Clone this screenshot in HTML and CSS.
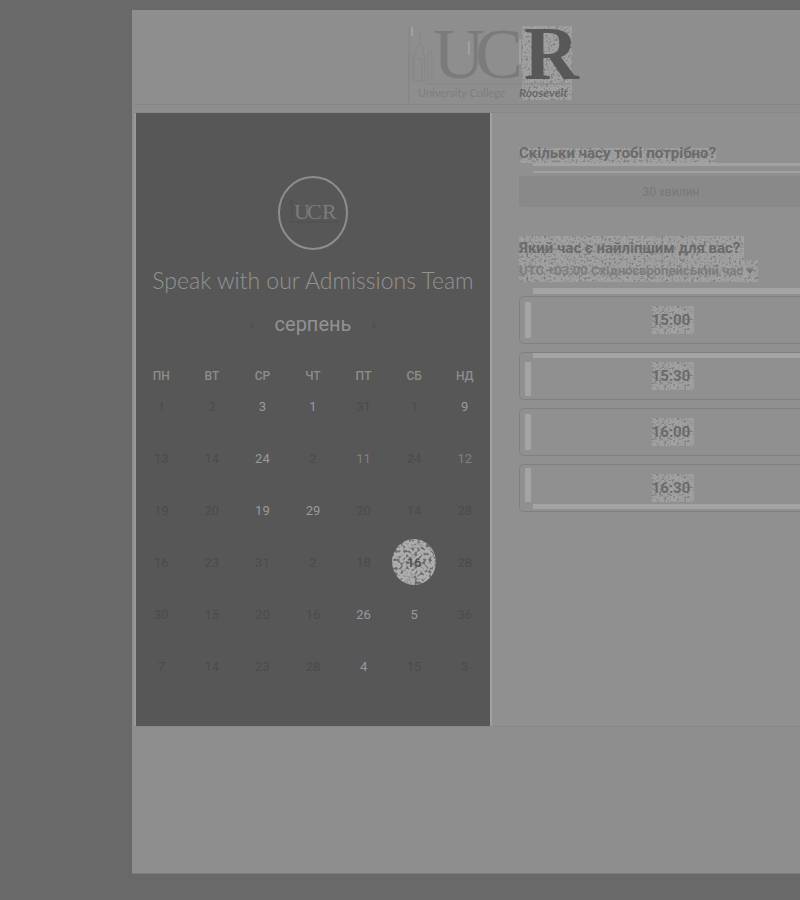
FILE: index.html
```
<!DOCTYPE html>
<html lang="uk">
<head>
<meta charset="utf-8">
<title>Speak with our Admissions Team</title>
<link rel="stylesheet" href="styles.css">
</head>
<body>
<svg class="defs" aria-hidden="true">
  <filter id="grain" x="0" y="0" width="100%" height="100%" color-interpolation-filters="sRGB">
    <feTurbulence type="fractalNoise" baseFrequency="0.4" numOctaves="2" seed="4"/>
    <feColorMatrix values="1.2 0 0 0 0  1.2 0 0 0 0  1.2 0 0 0 0  0 0 0 0 1"/>
    <feComponentTransfer>
      <feFuncR type="discrete" tableValues=".5 .5 .48 .52 .57 .6 .64 .62 .62 .62"/>
      <feFuncG type="discrete" tableValues=".5 .5 .48 .52 .57 .6 .64 .62 .62 .62"/>
      <feFuncB type="discrete" tableValues=".5 .5 .48 .52 .57 .6 .64 .62 .62 .62"/>
    </feComponentTransfer>
    <feComposite in2="SourceGraphic" operator="in"/>
  </filter>
  <filter id="grain-strong" x="0" y="0" width="100%" height="100%" color-interpolation-filters="sRGB">
    <feTurbulence type="fractalNoise" baseFrequency="0.35" numOctaves="1" seed="9"/>
    <feColorMatrix values="1 0 0 0 0  1 0 0 0 0  1 0 0 0 0  0 0 0 0 1"/>
    <feComponentTransfer>
      <feFuncR type="discrete" tableValues=".42 .42 .42 .46 .6 .68 .68 .68 .68 .68"/>
      <feFuncG type="discrete" tableValues=".42 .42 .42 .46 .6 .68 .68 .68 .68 .68"/>
      <feFuncB type="discrete" tableValues=".42 .42 .42 .46 .6 .68 .68 .68 .68 .68"/>
    </feComponentTransfer>
    <feComposite in2="SourceGraphic" operator="in"/>
  </filter>
</svg>
<main class="modal">
  <header class="brand">
    <svg class="logo" viewBox="0 0 172 80" role="img" aria-label="University College Roosevelt">
      <rect x="116" y="2" width="50" height="74" fill="#999" filter="url(#grain)"/>
      <g fill="none" stroke="#858585" stroke-width="1">
        <path d="M14 7v12l-4 5v5l-2 4v24h11V33l-2-4v-5l-3-5M3 79V28h4v28M22 28h4v28h-4zM11 35h5v20M20 60h146M3 2v75"/>
      </g>
      <path d="M6 3v9M63 17v14M78 30v10M155 5v46M114 15v25" stroke="#a0a0a0" stroke-width="2"/>
      <text class="logo-light" x="27" y="54">U</text>
      <text class="logo-light" x="69" y="54">C</text>
      <text class="logo-bold" x="118" y="55">R</text>
      <text class="logo-sub" x="12" y="73">University College</text>
      <text class="logo-name" x="113" y="73">Roosevelt</text>
    </svg>
  </header>
  <div class="card">
    <section class="calendar">
      <svg class="badge" viewBox="0 0 72 76" role="img" aria-label="UCR">
        <ellipse cx="36" cy="38" rx="34" ry="36" fill="none" stroke="#8e8e8e" stroke-width="2"/>
        <text class="badge-text" x="17" y="44">U</text>
        <text class="badge-text" x="30" y="44">C</text>
        <text class="badge-text" x="45" y="44">R</text>
        <path d="M12 29l3-5v20M13 47h48" fill="none" stroke="#4f4f4f"/>
      </svg>
      <h1>Speak with our Admissions Team</h1>
      <div class="month"><button type="button" aria-label="Попередній місяць">‹</button><h2>серпень</h2><button type="button" aria-label="Наступний місяць">›</button></div>
      <table>
        <thead><tr><th>ПН</th><th>ВТ</th><th>СР</th><th>ЧТ</th><th>ПТ</th><th>СБ</th><th>НД</th></tr></thead>
        <tbody>
          <tr><td>1</td><td>2</td><td class="open">3</td><td class="open">1</td><td>31</td><td>1</td><td class="open">9</td></tr>
          <tr><td>13</td><td>14</td><td class="open">24</td><td>2</td><td class="open soft">11</td><td>24</td><td class="open soft">12</td></tr>
          <tr><td>19</td><td>20</td><td class="open">19</td><td class="open">29</td><td>20</td><td>14</td><td>28</td></tr>
          <tr><td>16</td><td>23</td><td>31</td><td>2</td><td>18</td><td><button type="button" class="selected"><span>16</span></button></td><td>28</td></tr>
          <tr><td>30</td><td>15</td><td>20</td><td>16</td><td class="open">26</td><td class="open">5</td><td>36</td></tr>
          <tr><td>7</td><td>14</td><td>23</td><td>28</td><td class="open">4</td><td>15</td><td>3</td></tr>
        </tbody>
      </table>
    </section>
    <section class="times">
      <h3><span class="speckle half">Скільки часу тобі потрібно?</span></h3>
      <button type="button" class="duration">30 хвилин</button>
      <h3><span class="speckle">Який час є найліпшим для вас?</span></h3>
      <button type="button" class="zone"><span class="speckle">UTC +03:00 Східноєвропейський час <svg viewBox="0 0 8 5" aria-hidden="true"><path d="M0 0h8L4 5z" fill="#777"/></svg></span></button>
      <div class="slots">
        <button type="button"><span class="speckle">15:00</span></button>
        <button type="button" class="lit-top"><span class="speckle">15:30</span></button>
        <button type="button"><span class="speckle">16:00</span></button>
        <button type="button" class="lit-bottom"><span class="speckle">16:30</span></button>
      </div>
    </section>
  </div>
</main>
</body>
</html>
```
FILE: styles.css
```
* { box-sizing: border-box; }
body {
  margin: 0;
  min-height: 100vh;
  padding: 10px 0 26px 132px;
  background: #696969;
  color: #707070;
  font-family: Roboto, "Liberation Sans", sans-serif;
  overflow: hidden;
}
h1, h2, h3 { margin: 0; font-weight: 400; }
button { font: inherit; color: inherit; border: 0; padding: 0; background: none; }
.defs { position: absolute; width: 0; height: 0; }
.modal {
  min-width: 720px;
  padding: 0 2px 146px;
  background: #8e8e8e;
  border-bottom: 1px solid #7d7d7d;
}
.brand {
  height: 102px;
  padding-top: 14px;
  text-align: center;
  background: linear-gradient(#858585, #858585) 0 94px / 100% 1px no-repeat;
}
.logo { width: 172px; height: 80px; overflow: visible; }
.logo-light, .logo-bold { font-family: "Liberation Serif", serif; }
.logo-light { font-size: 72px; fill: #7b7b7b; }
.logo-bold { font-size: 76px; font-weight: 700; fill: #585858; }
.logo-sub, .logo-name { font-family: Lato, sans-serif; font-size: 11px; }
.logo-sub { fill: #7e7e7e; }
.logo-name { fill: #686868; font-size: 12px; font-style: italic; font-weight: 700; }

.card {
  display: grid;
  grid-template-columns: 1fr 1fr;
  background: #909090;
  border-top: 1px solid #888;
  border-bottom: 1px solid #888;
}
.calendar {
  display: flex;
  flex-direction: column;
  align-items: center;
  padding: 62px 0 26px;
  background: #575757;
  border-left: 2px solid #999;
  border-right: 2px solid #a0a0a0;
}
.badge { width: 72px; height: 76px; }
.badge-text { font-family: "Liberation Serif", serif; font-size: 22px; fill: #7c7c7c; }
h1 {
  margin-top: 14px;
  font: 300 23px/30px Lato, sans-serif;
  color: #939393;
  white-space: nowrap;
}
.month { display: flex; align-items: center; gap: 20px; height: 24px; margin-top: 17px; color: #4c4c4c; }
.month h2 { font-size: 20px; line-height: 24px; color: #929292; }
table { width: 100%; margin-top: 28px; border-collapse: collapse; table-layout: fixed; }
th, td { padding: 0; text-align: center; }
th { height: 24px; font-size: 12px; font-weight: 500; color: #8d8d8d; }
td { height: 52px; padding-bottom: 16px; font-size: 13px; color: #4b4b4b; }
.open { color: #9a9a9a; }
.open.soft { color: #808080; }
.selected {
  position: relative;
  display: inline-block;
  width: 44px;
  height: 46px;
  margin: -10px 0;
  color: #555;
  font-weight: 700;
}
.selected::before {
  content: "";
  position: absolute;
  inset: 0;
  border-radius: 50%;
  background: #999;
  filter: url(#grain-strong);
}
.selected span { position: relative; }

.times { padding: 30px 27px 0 27px; }
.times h3 { font-size: 15px; line-height: 20px; font-weight: 700; color: #6b6b6b; white-space: nowrap; }
.speckle { position: relative; display: inline-block; isolation: isolate; }
.speckle::before {
  content: "";
  position: absolute;
  inset: -2px -4px -2px 0;
  z-index: -1;
  background: #999;
  filter: url(#grain);
}
.half::before { inset: 5px 0 0; }
.duration {
  display: block;
  width: 100%;
  height: 44px;
  padding-top: 13px;
  border-radius: 4px;
  color: #787878;
  font-size: 12px;
  background:
    linear-gradient(#a2a2a2, #a2a2a2) 14px 0 / 100% 3px no-repeat,
    linear-gradient(#a2a2a2, #a2a2a2) 14px 8px / 100% 2px no-repeat,
    linear-gradient(#898989, #898989) 0 13px / 100% 31px no-repeat;
}
.duration + h3 { margin-top: 31px; }
.zone { display: block; padding-top: 4px; font-size: 13px; line-height: 18px; font-weight: 700; color: #7d7d7d; white-space: nowrap; }
.zone svg { width: 8px; height: 5px; vertical-align: middle; }
.slots {
  display: grid;
  gap: 8px;
  margin-top: 8px;
  padding-top: 8px;
  background: linear-gradient(#a4a4a4, #a4a4a4) 14px 0 / 100% 6px no-repeat;
}
.slots button {
  height: 48px;
  border: 1px solid #808080;
  border-radius: 4px;
  font-size: 15px;
  font-weight: 700;
  color: #6b6b6b;
  background: linear-gradient(#a4a4a4, #a4a4a4) 5px 5px / 6px 36px no-repeat;
}
.slots .speckle::before { inset: -5px -4px -5px 0; }
.slots .lit-top {
  background:
    linear-gradient(#a4a4a4, #a4a4a4) 13px 0 / 100% 5px no-repeat,
    linear-gradient(#a4a4a4, #a4a4a4) 5px 9px / 6px 34px no-repeat;
}
.slots .lit-bottom {
  background:
    linear-gradient(#a4a4a4, #a4a4a4) 13px 39px / 100% 5px no-repeat,
    linear-gradient(#a4a4a4, #a4a4a4) 5px 3px / 6px 34px no-repeat;
}
```
